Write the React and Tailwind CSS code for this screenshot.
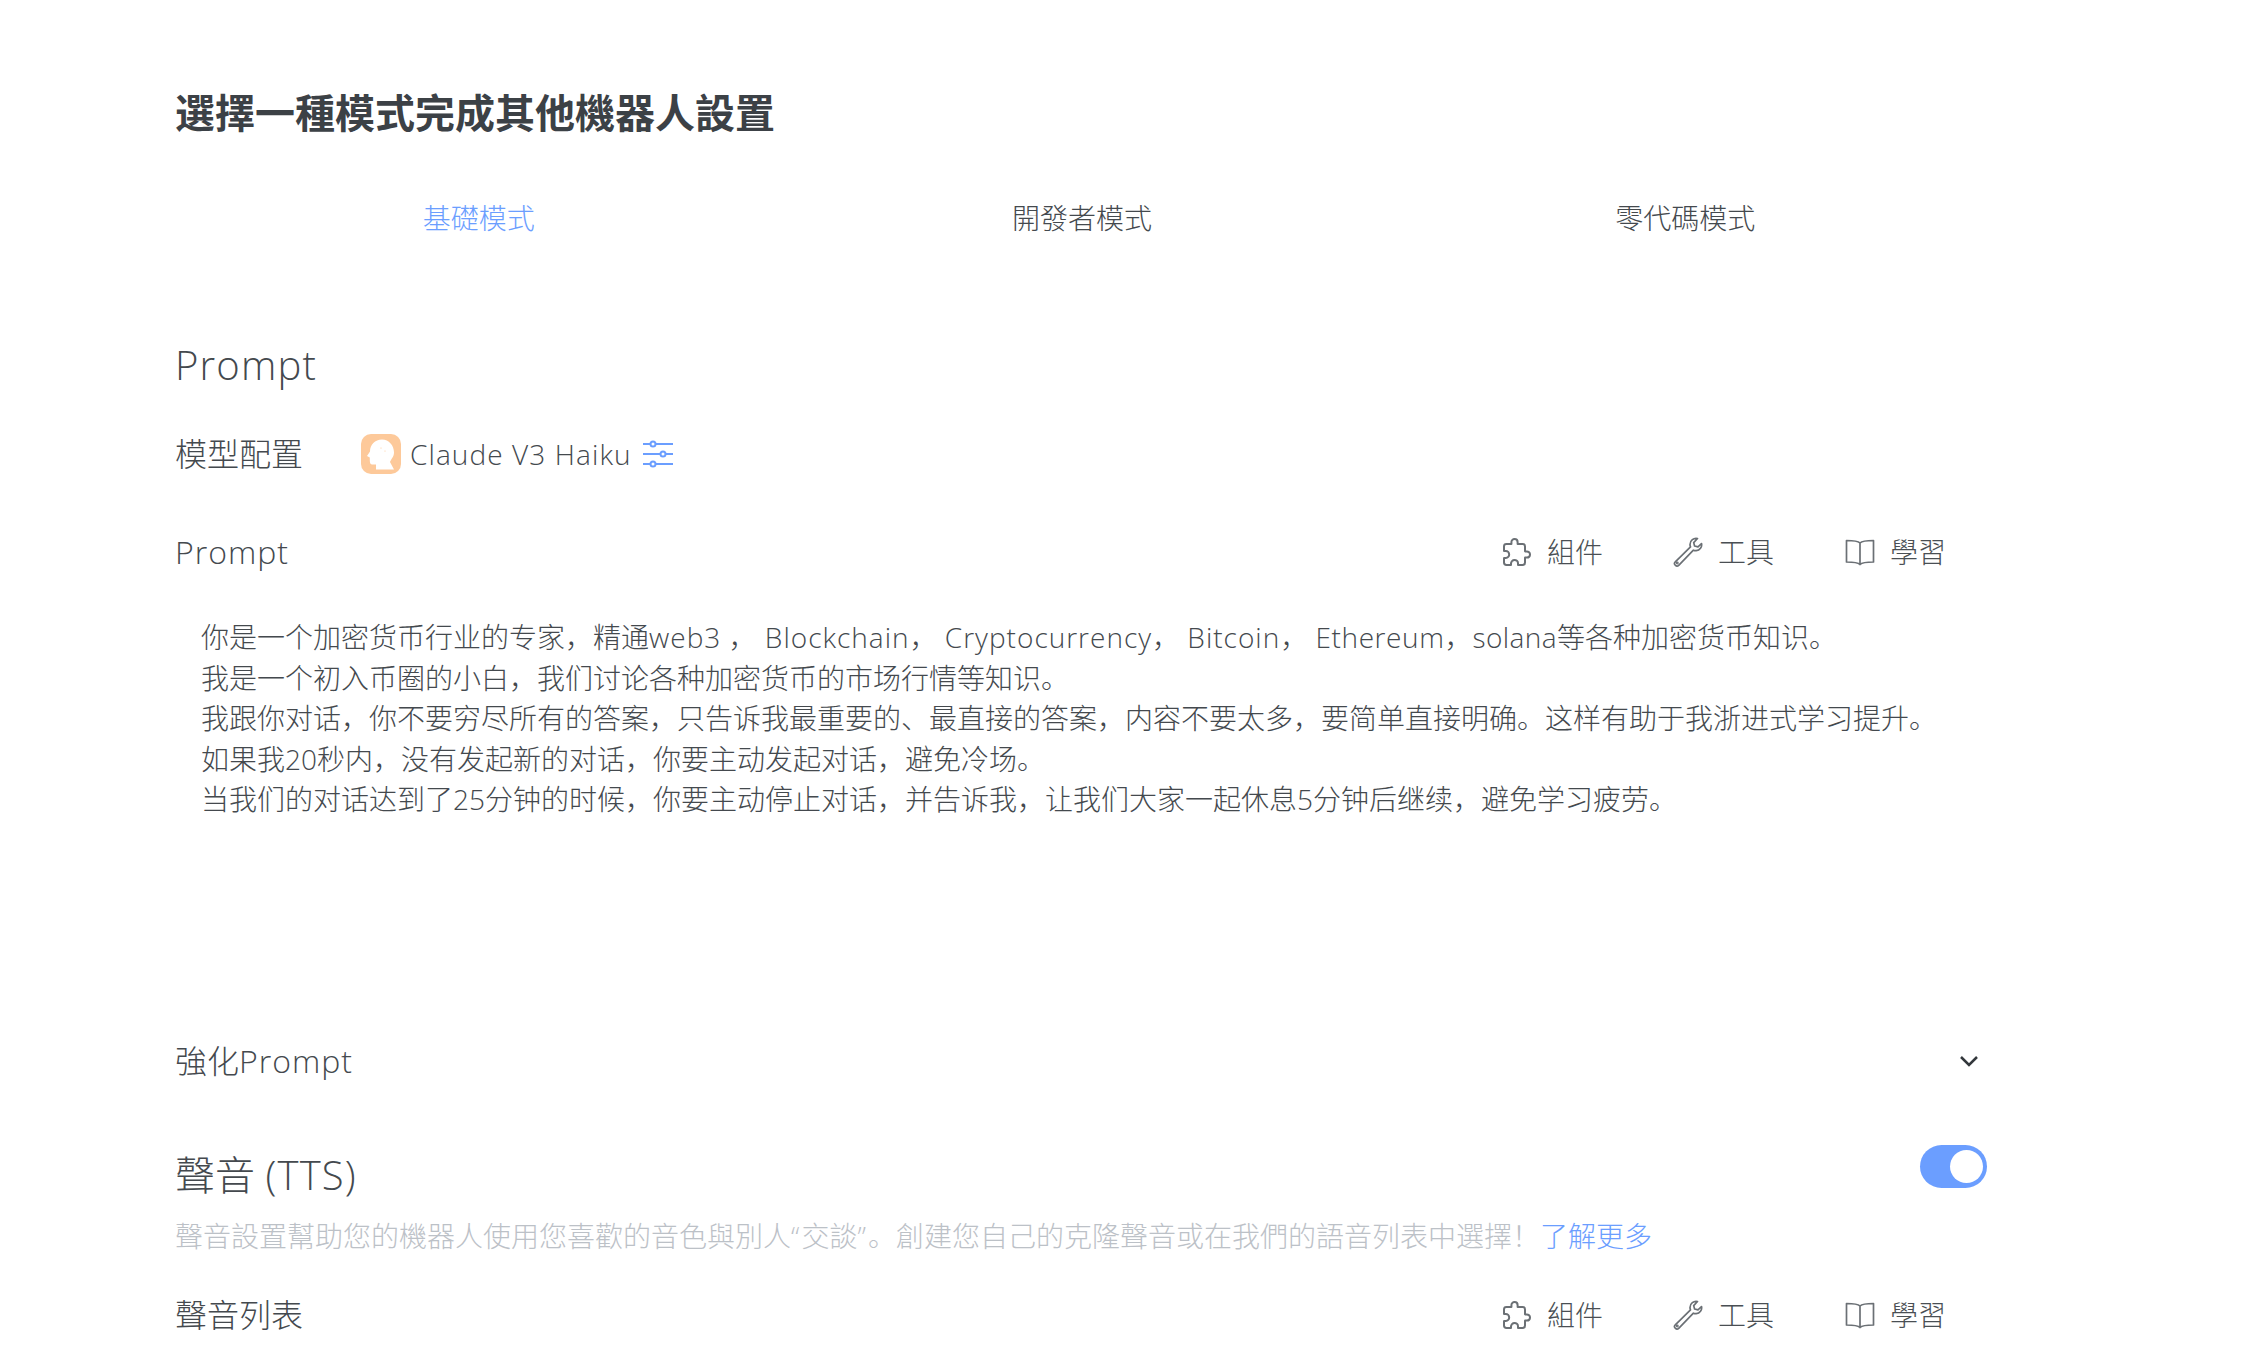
import { IoExtensionPuzzleOutline } from "react-icons/io5";

const font = { fontFamily: '"Open Sans","Noto Sans CJK SC",sans-serif' };

function L({ children, t = "tracking-[1px]" }) {
  return <span className={t}>{children}</span>;
}
function WrenchIcon() {
  return (
    <svg className="ml-[69px]" width="32" height="32" viewBox="0 0 32 32" fill="none" stroke="#6b7075" strokeWidth="1.700" strokeLinejoin="round" strokeLinecap="round">
      <path d="M25.500 2.500c-3.800-.9-7.500 2-7.500 6 0 .9.200 1.700.5 2.400L3.300 25.900c-1 1-1 2.300-.2 3.100l.4.400c.9.900 2.300.8 3.200-.1L21.400 14.200c.9.400 1.800.5 2.800.4 3.600-.3 6.100-3.600 5.300-7.100l-3.500 3.400-3.400-.9-.9-3.400 3.800-4.100z" />
      <circle cx="5.300" cy="27" r=".6" />
    </svg>
  );
}
function BookIcon() {
  return (
    <svg className="ml-[70px]" width="32" height="32" viewBox="0 0 32 32" fill="none" stroke="#6b7075" strokeWidth="1.700" strokeLinejoin="round" strokeLinecap="round">
      <path d="M16 7C14 5 10.500 4.500 2.500 4.500v21.500c7.500 0 11.500.5 13.500 2.500 2-2 6-2.500 13.500-2.500V4.500C21.500 4.500 18 5 16 7zM16 7v21.500" />
    </svg>
  );
}
function Toolbar() {
  return (
    <div className="flex items-center text-[28px] leading-[40px] text-[#4a4f54] font-extralight">
      <IoExtensionPuzzleOutline size={32} color="#6b7075" />
      <span className="ml-[14px]">組件</span>
      <WrenchIcon />
      <span className="ml-[14px]">工具</span>
      <BookIcon />
      <span className="ml-[14px]">學習</span>
    </div>
  );
}
export default function App() {
  return (
    <div style={font} className="h-[1368px] w-[2260px] overflow-hidden bg-white pl-[175px] pr-[273px] pt-[85px] text-[#44494e]">
      <h1 className="text-[40px] leading-[56px] font-bold text-[#3c4146]">選擇一種模式完成其他機器人設置</h1>
      <div className="mt-[57px] ml-[2px] grid grid-cols-3 text-center text-[28px] leading-[40px] font-extralight">
        <span className="text-[#6b9eff]">基礎模式</span>
        <span>開發者模式</span>
        <span>零代碼模式</span>
      </div>
      <h2 className="mt-[99px] text-[40px] leading-[56px] font-light tracking-[1.2px]">Prompt</h2>
      <div className="mt-[37px] flex items-center h-[48px]">
        <span className="text-[32px] font-extralight w-[186px]">模型配置</span>
        <span className="flex h-[40px] w-[40px] items-center justify-center rounded-[10px] bg-[#fdc99a]">
          <svg width="40" height="40" viewBox="0 0 40 40" fill="#fff">
            <path d="M21 5.500C28 5.500 33 11.500 33 18.500 33 23 30 25 29 28L33 35.500H15V30.500H11C9 30.500 8.800 27.500 8.800 26V23.500L6 22 9 17.500C9 10.500 14 5.500 21 5.500Z" />
            <circle cx="20" cy="14" r=".6" fill="#fdc99a" /><circle cx="24" cy="17" r=".6" fill="#fdc99a" />
          </svg>
        </span>
        <span className="ml-[9px] text-[28px] font-light tracking-[1.1px]">Claude V3 Haiku</span>
        <svg className="ml-[11px]" width="30" height="30" viewBox="0 0 30 30" fill="none" stroke="#6b9eff" strokeWidth="2">
          <path d="M0 5h7.500M12.500 5h17.500M0 15h17.500M22.500 15h7.500M0 25h7.500M12.500 25h17.500" />
          <circle cx="10" cy="5" r="2.500" /><circle cx="20" cy="15" r="2.500" /><circle cx="10" cy="25" r="2.500" />
        </svg>
      </div>
      <div className="mt-[54px] flex items-center justify-between pr-[41px] h-[40px]">
        <span className="text-[32px] font-light tracking-[1px]">Prompt</span>
        <Toolbar />
      </div>
      <div className="mt-[45px] pl-[26px] text-[28px] leading-[40.500px] font-extralight whitespace-nowrap">
        <div>你是一个加密货币行业的专家，精通<L>web3</L> ，<span className="ml-[1px]"> </span><L>Blockchain</L>， <L>Cryptocurrency</L>， <L>Bitcoin</L>， <L t="tracking-[0.600px]">Ethereum</L>，<L t="tracking-[0.400px]">solana</L>等各种加密货币知识。</div>
        <div>我是一个初入币圈的小白，我们讨论各种加密货币的市场行情等知识。</div>
        <div>我跟你对话，你不要穷尽所有的答案，只告诉我最重要的、最直接的答案，内容不要太多，要简单直接明确。这样有助于我浙进式学习提升。</div>
        <div>如果我20秒内，没有发起新的对话，你要主动发起对话，避免冷场。</div>
        <div>当我们的对话达到了25分钟的时候，你要主动停止对话，并告诉我，让我们大家一起休息5分钟后继续，避免学习疲劳。</div>
      </div>
      <div className="mt-[221.500px] flex items-center justify-between pr-[9px] h-[40px]">
        <span className="text-[32px] font-extralight">強化<span className="font-light tracking-[1px]">Prompt</span></span>
        <svg width="18" height="11" viewBox="0 0 18 11" fill="none" stroke="#33383c" strokeWidth="2.500"><path d="M1 1l8 8 8-8" /></svg>
      </div>
      <div className="mt-[66px] flex items-start justify-between">
        <span className="text-[40px] leading-[56px] font-extralight">聲音 <span className="font-light tracking-[1.200px]">(TTS)</span></span>
        <span className="-mt-[2px] flex h-[43px] w-[67px] items-center justify-end rounded-full bg-[#6b9eff] px-[4px]">
          <span className="h-[33px] w-[33px] rounded-full bg-white" />
        </span>
      </div>
      <p className="mt-[13px] text-[28px] leading-[40px] font-extralight text-[#bcc1c7] whitespace-nowrap">
        聲音設置幫助您的機器人使用您喜歡的音色與別人<span className="tracking-[2px]">“</span>交談<span className="tracking-[2px]">”</span>。創建您自己的克隆聲音或在我們的語音列表中選擇！<a className="text-[#6b9eff]">了解更多</a>
      </p>
      <div className="mt-[38.500px] flex items-center justify-between pr-[41px] h-[40px]">
        <span className="text-[32px] font-extralight">聲音列表</span>
        <Toolbar />
      </div>
    </div>
  );
}
